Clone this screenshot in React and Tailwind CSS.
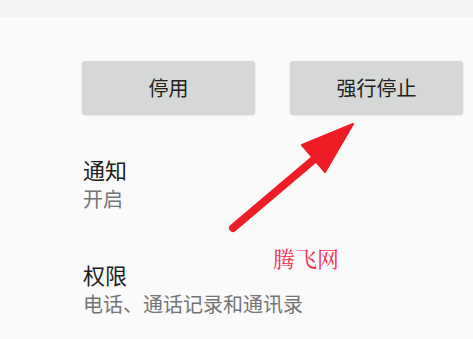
import React from "react";

const font = { fontFamily: '"Noto Sans CJK SC", "Noto Sans", sans-serif' };

const Arrow = () => (
  <svg
    className="absolute left-0 top-0 pointer-events-none"
    width="473"
    height="339"
    viewBox="0 0 473 339"
  >
    <line x1="233" y1="228" x2="318" y2="156" stroke="#ee1c25" strokeWidth="8" strokeLinecap="round" />
    <polygon points="353,124 302,145 325,172" fill="#ee1c25" stroke="#ee1c25" strokeWidth="2" strokeLinejoin="round" />
  </svg>
);

const Item = ({ title, sub }) => (
  <div className="flex flex-col">
    <span className="text-[22px] leading-[30px] text-[#212121]">{title}</span>
    <span className="mt-[2px] text-[20px] leading-[26px] text-[#757575]">{sub}</span>
  </div>
);

export default function App() {
  return (
    <div className="relative w-[473px] h-[339px] overflow-hidden bg-[#fafafa]" style={font}>
      <div className="h-[17px] bg-[#f3f3f3]" />
      <div className="flex gap-[35px] pl-[82px] pt-[44px]">
        <button className="w-[173px] h-[53px] rounded-[3px] bg-[#d6d7d7] shadow-[0_1px_2px_rgba(0,0,0,0.2)] text-[20px] text-[#222]">
          停用
        </button>
        <button className="w-[173px] h-[53px] rounded-[3px] bg-[#d6d7d7] shadow-[0_1px_2px_rgba(0,0,0,0.2)] text-[20px] text-[#222]">
          强行停止
        </button>
      </div>
      <div className="flex flex-col gap-[47px] pl-[83px] pt-[40px]">
        <Item title="通知" sub="开启" />
        <Item title="权限" sub="电话、通话记录和通讯录" />
      </div>
      <span
        className="absolute left-[273px] top-[243px] text-[22px] leading-[30px] text-[#f2304e]"
        style={{ fontFamily: '"Noto Serif CJK SC", "Noto Sans CJK SC", serif' }}
      >
        腾飞网
      </span>
      <Arrow />
    </div>
  );
}
